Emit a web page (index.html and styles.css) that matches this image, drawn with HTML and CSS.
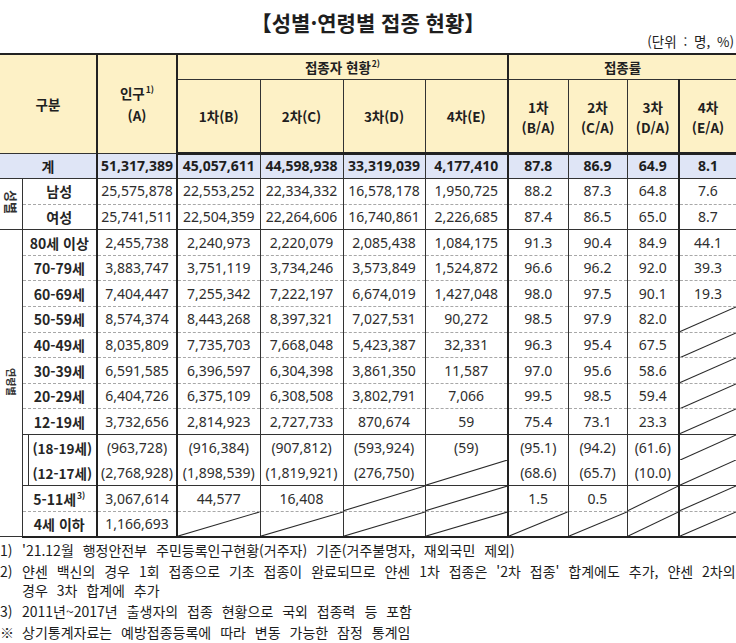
FILE: index.html
```
<!DOCTYPE html>
<html lang="ko">
<head>
<meta charset="utf-8">
<title>성별·연령별 접종 현황</title>
<link rel="stylesheet" href="styles.css">
</head>
<body>
<div class="page">
  <h1 class="title">【성별·연령별 접종 현황】</h1>
  <div class="unit">(단위 : 명, %)</div>
  <table class="tbl">
    <colgroup>
      <col class="c0"><col class="c1"><col class="c2 tk"><col class="c3 tk"><col class="c4"><col class="c5"><col class="c6"><col class="c7 tk"><col class="c8"><col class="c9"><col class="c10 tk">
    </colgroup>
    <thead>
      <tr class="h1">
        <th colspan="2" rowspan="2">구분</th>
        <th rowspan="2">인구<sup>1)</sup><br>(A)</th>
        <th colspan="4">접종자 현황<sup>2)</sup></th>
        <th colspan="4">접종률</th>
      </tr>
      <tr class="h2">
        <th>1차(B)</th><th>2차(C)</th><th>3차(D)</th><th>4차(E)</th>
        <th class="r">1차<br>(B/A)</th><th class="r">2차<br>(C/A)</th><th class="r">3차<br>(D/A)</th><th class="r">4차<br>(E/A)</th>
      </tr>
    </thead>
    <tbody>
      <tr class="total end">
        <td colspan="2" class="lb">계</td>
        <td>51,317,389</td><td>45,057,611</td><td>44,598,938</td><td>33,319,039</td><td>4,177,410</td><td>87.8</td><td>86.9</td><td>64.9</td><td>8.1</td>
      </tr>
      <tr>
        <td rowspan="2" class="grp"><span class="vt vt-a">성별</span></td>
        <td class="lb">남성</td>
        <td>25,575,878</td><td>22,553,252</td><td>22,334,332</td><td>16,578,178</td><td>1,950,725</td><td>88.2</td><td>87.3</td><td>64.8</td><td>7.6</td>
      </tr>
      <tr class="end">
        <td class="lb">여성</td>
        <td>25,741,511</td><td>22,504,359</td><td>22,264,606</td><td>16,740,861</td><td>2,226,685</td><td>87.4</td><td>86.5</td><td>65.0</td><td>8.7</td>
      </tr>
      <tr>
        <td rowspan="12" class="grp"><span class="vt vt-b">연령별</span></td>
        <td class="lb">80세 이상</td>
        <td>2,455,738</td><td>2,240,973</td><td>2,220,079</td><td>2,085,438</td><td>1,084,175</td><td>91.3</td><td>90.4</td><td>84.9</td><td>44.1</td>
      </tr>
      <tr>
        <td class="lb">70-79세</td>
        <td>3,883,747</td><td>3,751,119</td><td>3,734,246</td><td>3,573,849</td><td>1,524,872</td><td>96.6</td><td>96.2</td><td>92.0</td><td>39.3</td>
      </tr>
      <tr>
        <td class="lb">60-69세</td>
        <td>7,404,447</td><td>7,255,342</td><td>7,222,197</td><td>6,674,019</td><td>1,427,048</td><td>98.0</td><td>97.5</td><td>90.1</td><td>19.3</td>
      </tr>
      <tr>
        <td class="lb">50-59세</td>
        <td>8,574,374</td><td>8,443,268</td><td>8,397,321</td><td>7,027,531</td><td>90,272</td><td>98.5</td><td>97.9</td><td>82.0</td>
        <td class="x"><svg class="dg" viewBox="0 0 10 10" preserveAspectRatio="none"><line x1="0" y1="10" x2="10" y2="0"/></svg></td>
      </tr>
      <tr>
        <td class="lb">40-49세</td>
        <td>8,035,809</td><td>7,735,703</td><td>7,668,048</td><td>5,423,387</td><td>32,331</td><td>96.3</td><td>95.4</td><td>67.5</td>
        <td class="x"><svg class="dg" viewBox="0 0 10 10" preserveAspectRatio="none"><line x1="0" y1="10" x2="10" y2="0"/></svg></td>
      </tr>
      <tr>
        <td class="lb">30-39세</td>
        <td>6,591,585</td><td>6,396,597</td><td>6,304,398</td><td>3,861,350</td><td>11,587</td><td>97.0</td><td>95.6</td><td>58.6</td>
        <td class="x"><svg class="dg" viewBox="0 0 10 10" preserveAspectRatio="none"><line x1="0" y1="10" x2="10" y2="0"/></svg></td>
      </tr>
      <tr>
        <td class="lb">20-29세</td>
        <td>6,404,726</td><td>6,375,109</td><td>6,308,508</td><td>3,802,791</td><td>7,066</td><td>99.5</td><td>98.5</td><td>59.4</td>
        <td class="x"><svg class="dg" viewBox="0 0 10 10" preserveAspectRatio="none"><line x1="0" y1="10" x2="10" y2="0"/></svg></td>
      </tr>
      <tr class="end">
        <td class="lb">12-19세</td>
        <td>3,732,656</td><td>2,814,923</td><td>2,727,733</td><td>870,674</td><td>59</td><td>75.4</td><td>73.1</td><td>23.3</td>
        <td class="x"><svg class="dg" viewBox="0 0 10 10" preserveAspectRatio="none"><line x1="0" y1="10" x2="10" y2="0"/></svg></td>
      </tr>
      <tr class="open">
        <td class="lb sub">(18-19세)</td>
        <td>(963,728)</td><td>(916,384)</td><td>(907,812)</td><td>(593,924)</td><td>(59)</td><td>(95.1)</td><td>(94.2)</td><td>(61.6)</td>
        <td class="x"><svg class="dg" viewBox="0 0 10 10" preserveAspectRatio="none"><line x1="0" y1="10" x2="10" y2="0"/></svg></td>
      </tr>
      <tr class="end">
        <td class="lb sub">(12-17세)</td>
        <td>(2,768,928)</td><td>(1,898,539)</td><td>(1,819,921)</td><td>(276,750)</td>
        <td class="x"><svg class="dg" viewBox="0 0 10 10" preserveAspectRatio="none"><line x1="0" y1="10" x2="10" y2="0"/></svg></td>
        <td>(68.6)</td><td>(65.7)</td><td>(10.0)</td>
        <td class="x"><svg class="dg" viewBox="0 0 10 10" preserveAspectRatio="none"><line x1="0" y1="10" x2="10" y2="0"/></svg></td>
      </tr>
      <tr>
        <td class="lb">5-11세<sup>3)</sup></td>
        <td>3,067,614</td><td>44,577</td><td>16,408</td>
        <td class="x"><svg class="dg" viewBox="0 0 10 10" preserveAspectRatio="none"><line x1="0" y1="10" x2="10" y2="0"/></svg></td>
        <td class="x"><svg class="dg" viewBox="0 0 10 10" preserveAspectRatio="none"><line x1="0" y1="10" x2="10" y2="0"/></svg></td>
        <td>1.5</td><td>0.5</td>
        <td class="x"><svg class="dg" viewBox="0 0 10 10" preserveAspectRatio="none"><line x1="0" y1="10" x2="10" y2="0"/></svg></td>
        <td class="x"><svg class="dg" viewBox="0 0 10 10" preserveAspectRatio="none"><line x1="0" y1="10" x2="10" y2="0"/></svg></td>
      </tr>
      <tr class="last">
        <td class="lb">4세 이하</td>
        <td>1,166,693</td>
        <td class="x"><svg class="dg" viewBox="0 0 10 10" preserveAspectRatio="none"><line x1="0" y1="10" x2="10" y2="0"/></svg></td>
        <td class="x"><svg class="dg" viewBox="0 0 10 10" preserveAspectRatio="none"><line x1="0" y1="10" x2="10" y2="0"/></svg></td>
        <td class="x"><svg class="dg" viewBox="0 0 10 10" preserveAspectRatio="none"><line x1="0" y1="10" x2="10" y2="0"/></svg></td>
        <td class="x"><svg class="dg" viewBox="0 0 10 10" preserveAspectRatio="none"><line x1="0" y1="10" x2="10" y2="0"/></svg></td>
        <td class="x"><svg class="dg" viewBox="0 0 10 10" preserveAspectRatio="none"><line x1="0" y1="10" x2="10" y2="0"/></svg></td>
        <td class="x"><svg class="dg" viewBox="0 0 10 10" preserveAspectRatio="none"><line x1="0" y1="10" x2="10" y2="0"/></svg></td>
        <td class="x"><svg class="dg" viewBox="0 0 10 10" preserveAspectRatio="none"><line x1="0" y1="10" x2="10" y2="0"/></svg></td>
        <td class="x"><svg class="dg" viewBox="0 0 10 10" preserveAspectRatio="none"><line x1="0" y1="10" x2="10" y2="0"/></svg></td>
      </tr>
    </tbody>
  </table>
  <div class="notes">
    <p class="fn"><span class="num">1)</span><span class="txt">'21.12월 행정안전부 주민등록인구현황(거주자) 기준(거주불명자, 재외국민 제외)</span></p>
    <p class="fn"><span class="num">2)</span><span class="txt">얀센 백신의 경우 1회 접종으로 기초 접종이 완료되므로 얀센 1차 접종은 '2차 접종' 합계에도 추가, 얀센 2차의<br>경우 3차 합계에 추가</span></p>
    <p class="fn"><span class="num">3)</span><span class="txt">2011년~2017년 출생자의 접종 현황으로 국외 접종력 등 포함</span></p>
    <p class="fn"><span class="num">※</span><span class="txt">상기통계자료는 예방접종등록에 따라 변동 가능한 잠정 통계임</span></p>
  </div>
</div>
</body>
</html>
```

FILE: styles.css
```
html, body {
  margin: 0;
  padding: 0;
  background: #ffffff;
}

body {
  font-family: "Noto Sans CJK KR", "Noto Sans", sans-serif;
  color: #222222;
}

.page {
  width: 736px;
}

.title {
  margin: 0;
  padding-top: 10px;
  font-size: 21px;
  line-height: 24px;
  font-weight: 700;
  text-align: center;
  color: #1e1e1e;
}

.unit {
  margin-top: -1px;
  padding-right: 2px;
  font-size: 13.5px;
  line-height: 16px;
  word-spacing: 3px;
  text-align: right;
  color: #222222;
}

.tbl {
  margin-top: 4px;
  width: 736px;
  table-layout: fixed;
  border-collapse: collapse;
  border-top: 2px solid #222222;
  border-left: hidden;
  border-right: hidden;
}

.c0 { width: 22px; }
.c1 { width: 75px; }
.c2 { width: 80px; }
.c3 { width: 83px; }
.c4 { width: 83px; }
.c5 { width: 82px; }
.c6 { width: 83px; }
.c7 { width: 60px; }
.c8 { width: 59px; }
.c9 { width: 52px; }
.c10 { width: 57px; }

.tk {
  border-left: 2px solid #222222;
}

.tbl th,
.tbl td {
  padding: 0;
  text-align: center;
  vertical-align: middle;
  border-left: 1px solid #333333;
  border-right: 1px solid #333333;
  white-space: nowrap;
  overflow: hidden;
}

.tbl th {
  background: #fdf1c6;
  font-family: "Noto Sans CJK KR", sans-serif;
  font-size: 13.5px;
  font-weight: 700;
  line-height: 22px;
  color: #202020;
  border-bottom: 1px solid #333333;
}

.tbl .h1 {
  height: 25px;
}

.tbl .h2 {
  height: 74px;
}

.tbl .h2 th {
  border-bottom: 3px solid #222222;
}

.tbl .h2 th.r {
  line-height: 20px;
  padding-top: 2px;
}

.tbl sup {
  font-size: 8.5px;
  line-height: 0;
  vertical-align: 6px;
  margin-left: 1px;
}

.tbl tbody tr {
  height: 25.6px;
}

.tbl td {
  font-family: "Noto Sans", sans-serif;
  font-size: 14px;
  line-height: 18px;
  color: #2e2e2e;
  border-bottom: 1px dashed #a8a8a8;
}

.tbl td.lb {
  font-family: "Noto Sans CJK KR", sans-serif;
  font-size: 14px;
  font-weight: 700;
  color: #262626;
}

.tbl td.lb.sub {
  font-size: 13.5px;
  padding-left: 6px;
  background: linear-gradient(#333333, #333333) no-repeat 5px 0 / 1px 100%;
}

.tbl tr.total td {
  background: #dfe5f6;
  font-weight: 700;
  color: #1e1e1e;
}

.tbl tr.end td {
  border-bottom: 1px solid #333333;
}

.tbl tr.open td {
  border-bottom-style: none;
}

.tbl tr.last td {
  border-bottom: 2px solid #222222;
}

.tbl td.grp {
  border-bottom: 1px solid #333333;
  background: #ffffff;
}

.vt {
  display: inline-block;
  writing-mode: vertical-rl;
  text-orientation: sideways;
  font-family: "Noto Sans CJK KR", sans-serif;
  font-weight: 700;
  color: #333333;
}

.vt-a {
  font-size: 13px;
  line-height: 14px;
}

.vt-b {
  font-size: 10px;
  line-height: 12px;
}

.tbl td.x {
  position: relative;
}

.dg {
  position: absolute;
  left: 0;
  top: 0;
  width: 100%;
  height: 100%;
  display: block;
}

.dg line {
  stroke: #2a2a2a;
  stroke-width: 1.1;
  vector-effect: non-scaling-stroke;
}

.notes {
  margin-top: 3px;
  font-family: "Noto Sans CJK KR", sans-serif;
  font-size: 14px;
  line-height: 19px;
  word-spacing: 5px;
  color: #1c1c1c;
}

.fn {
  display: flex;
  margin: 2px 0 0;
  white-space: nowrap;
}

.fn .num {
  flex: 0 0 22px;
  font-size: 14px;
  word-spacing: 0;
}

.fn .txt {
  flex: 1 1 auto;
}
```
